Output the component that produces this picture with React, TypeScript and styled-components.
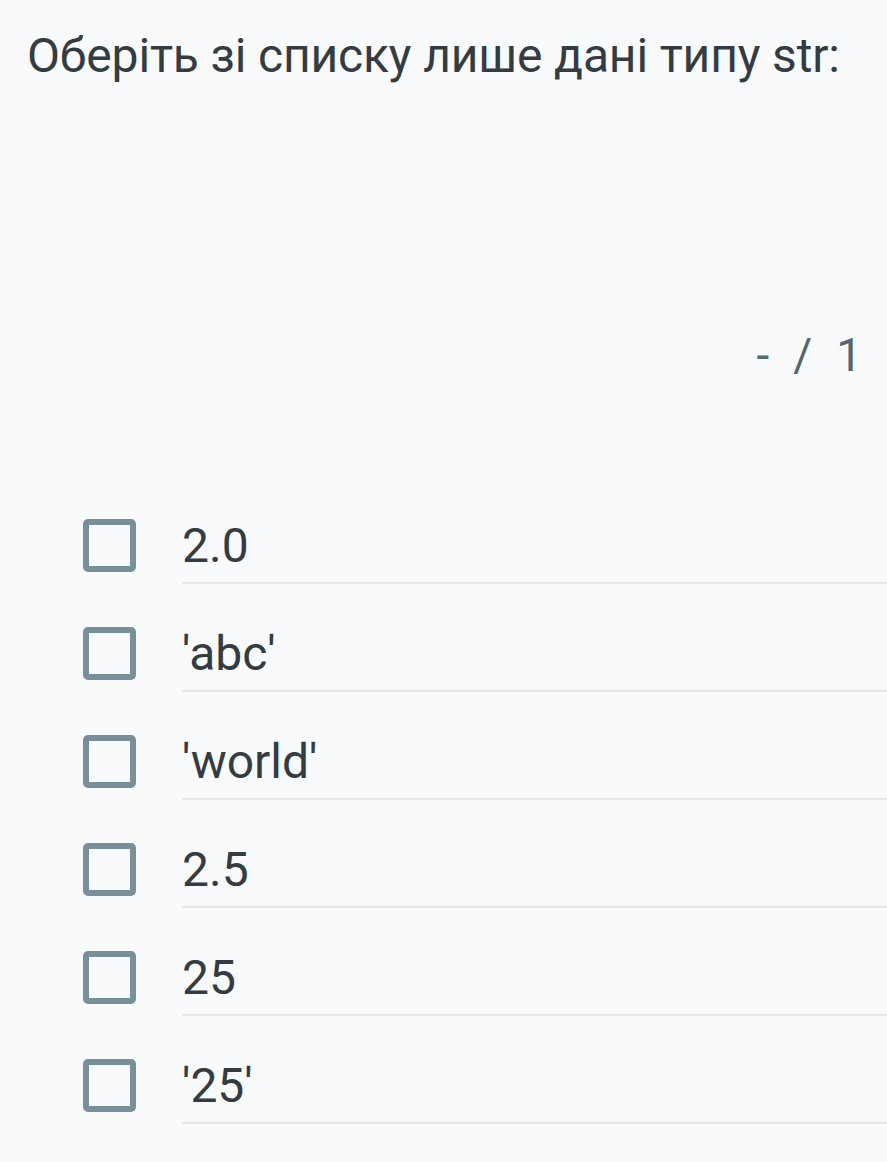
import React from "react";
import styled, { createGlobalStyle } from "styled-components";

const Global = createGlobalStyle`
  html, body { margin: 0; padding: 0; background: #f8fafc; }
  body { font-family: Roboto, "Noto Sans", sans-serif; }
`;

const Page = styled.div`
  width: 887px;
  min-height: 1162px;
  background: #f8fafc;
  box-sizing: border-box;
  padding: 22px 0 0 0;
  overflow: hidden;
`;

const Title = styled.h1`
  margin: 0 0 0 27px;
  font-size: 48px;
  font-weight: 400;
  line-height: 68px;
  letter-spacing: -0.15px;
  color: #343c41;
`;

const Score = styled.div`
  display: flex;
  justify-content: flex-end;
  align-items: baseline;
  gap: 24px;
  margin-top: 235px;
  padding-right: 25px;
  font-size: 46px;
  line-height: 60px;
  color: #56686c;
`;

const List = styled.ul`
  list-style: none;
  margin: 134px 0 0 0;
  padding: 0;
`;

const Row = styled.li`
  display: flex;
  align-items: flex-start;
  height: 108px;
`;

const Box = styled.span`
  flex: none;
  width: 53px;
  height: 53px;
  box-sizing: border-box;
  border: 6px solid #78909a;
  border-radius: 5px;
  margin: 0 46px 0 83px;
`;

const Label = styled.div`
  flex: 1;
  height: 63px;
  border-bottom: 2px solid #e6e9ec;
  font-size: 48px;
  line-height: 54px;
  color: #343c41;
`;

const options = ["2.0", "'abc'", "'world'", "2.5", "25", "'25'"];

export default function App() {
  return (
    <Page>
      <Global />
      <Title>Оберіть зі списку лише дані типу str:</Title>
      <Score>
        <span>-</span>
        <span>/</span>
        <span>1</span>
      </Score>
      <List>
        {options.map((o) => (
          <Row key={o}>
            <Box />
            <Label>{o}</Label>
          </Row>
        ))}
      </List>
    </Page>
  );
}
